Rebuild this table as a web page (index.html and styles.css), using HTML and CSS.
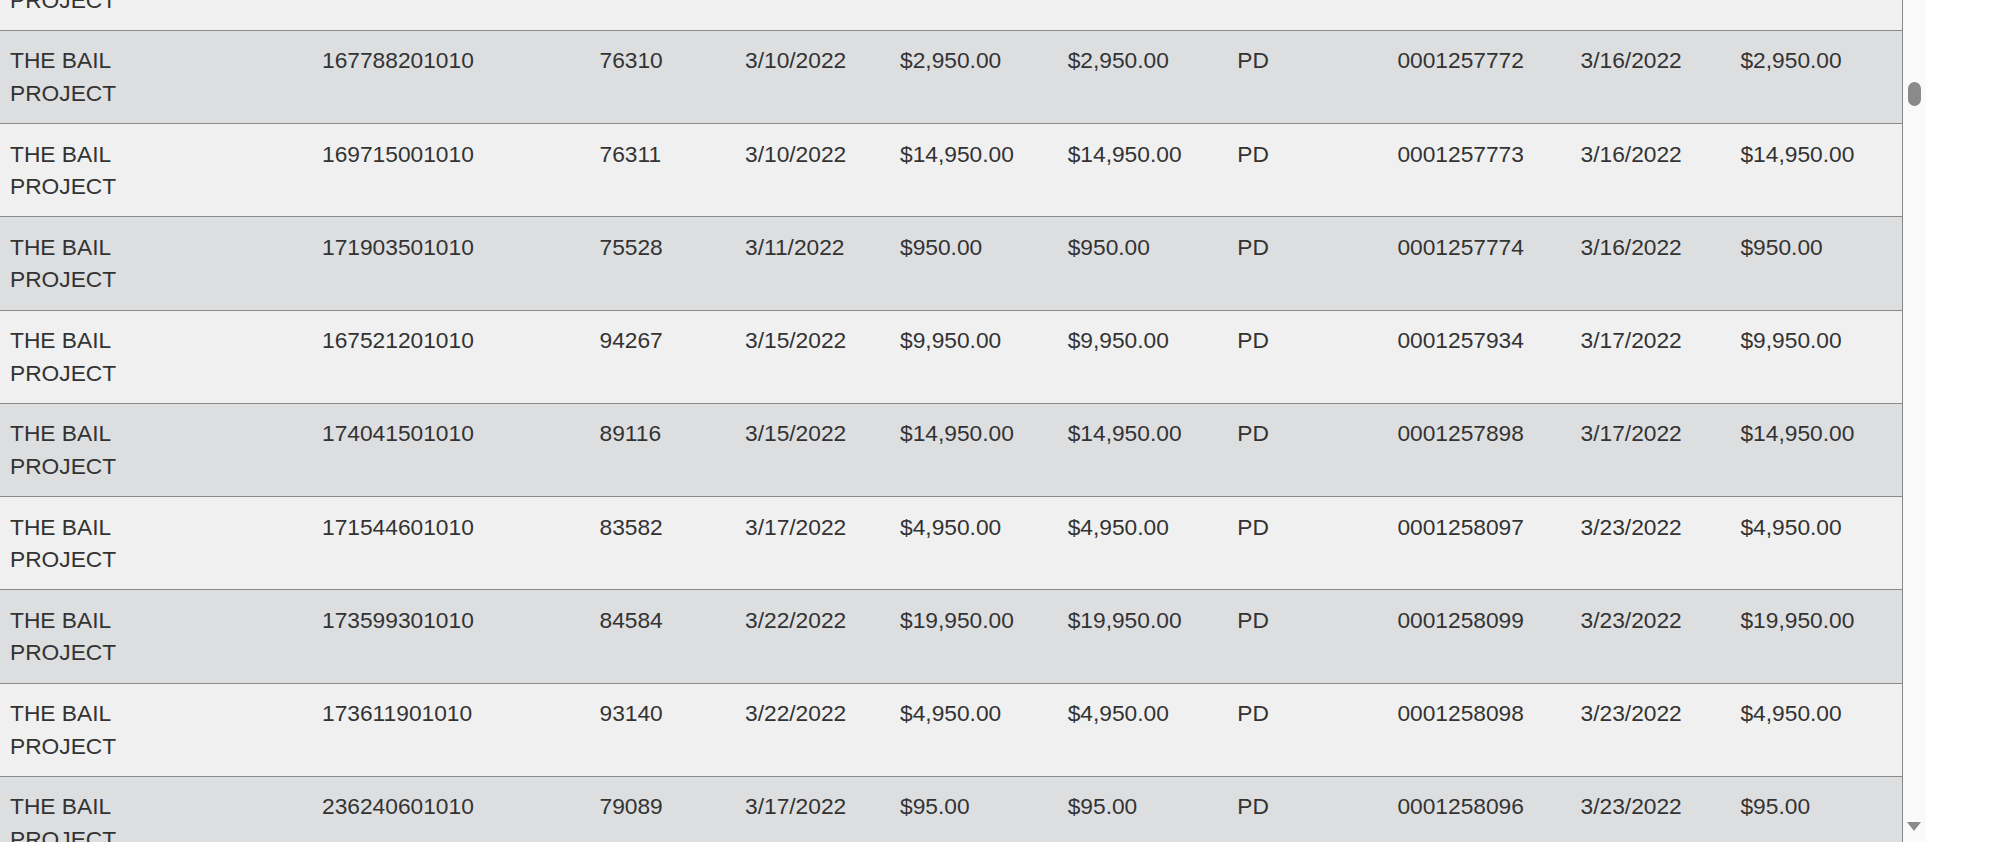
FILE: index.html
```html
<!DOCTYPE html>
<html>
<head>
<meta charset="utf-8">
<link rel="stylesheet" href="styles.css">
</head>
<body>
<div class="frame">
  <div class="pane">
    <div class="grid">
      <div class="row light"><div class="cell name">THE BAIL PROJECT</div><div class="cell">167788101010</div><div class="cell">76309</div><div class="cell">3/10/2022</div><div class="cell">$1,950.00</div><div class="cell">$1,950.00</div><div class="cell">PD</div><div class="cell">0001257771</div><div class="cell">3/16/2022</div><div class="cell">$1,950.00</div></div>
      <div class="row dark"><div class="cell name">THE BAIL PROJECT</div><div class="cell">167788201010</div><div class="cell">76310</div><div class="cell">3/10/2022</div><div class="cell">$2,950.00</div><div class="cell">$2,950.00</div><div class="cell">PD</div><div class="cell">0001257772</div><div class="cell">3/16/2022</div><div class="cell">$2,950.00</div></div>
      <div class="row light"><div class="cell name">THE BAIL PROJECT</div><div class="cell">169715001010</div><div class="cell">76311</div><div class="cell">3/10/2022</div><div class="cell">$14,950.00</div><div class="cell">$14,950.00</div><div class="cell">PD</div><div class="cell">0001257773</div><div class="cell">3/16/2022</div><div class="cell">$14,950.00</div></div>
      <div class="row dark"><div class="cell name">THE BAIL PROJECT</div><div class="cell">171903501010</div><div class="cell">75528</div><div class="cell">3/11/2022</div><div class="cell">$950.00</div><div class="cell">$950.00</div><div class="cell">PD</div><div class="cell">0001257774</div><div class="cell">3/16/2022</div><div class="cell">$950.00</div></div>
      <div class="row light"><div class="cell name">THE BAIL PROJECT</div><div class="cell">167521201010</div><div class="cell">94267</div><div class="cell">3/15/2022</div><div class="cell">$9,950.00</div><div class="cell">$9,950.00</div><div class="cell">PD</div><div class="cell">0001257934</div><div class="cell">3/17/2022</div><div class="cell">$9,950.00</div></div>
      <div class="row dark"><div class="cell name">THE BAIL PROJECT</div><div class="cell">174041501010</div><div class="cell">89116</div><div class="cell">3/15/2022</div><div class="cell">$14,950.00</div><div class="cell">$14,950.00</div><div class="cell">PD</div><div class="cell">0001257898</div><div class="cell">3/17/2022</div><div class="cell">$14,950.00</div></div>
      <div class="row light"><div class="cell name">THE BAIL PROJECT</div><div class="cell">171544601010</div><div class="cell">83582</div><div class="cell">3/17/2022</div><div class="cell">$4,950.00</div><div class="cell">$4,950.00</div><div class="cell">PD</div><div class="cell">0001258097</div><div class="cell">3/23/2022</div><div class="cell">$4,950.00</div></div>
      <div class="row dark"><div class="cell name">THE BAIL PROJECT</div><div class="cell">173599301010</div><div class="cell">84584</div><div class="cell">3/22/2022</div><div class="cell">$19,950.00</div><div class="cell">$19,950.00</div><div class="cell">PD</div><div class="cell">0001258099</div><div class="cell">3/23/2022</div><div class="cell">$19,950.00</div></div>
      <div class="row light"><div class="cell name">THE BAIL PROJECT</div><div class="cell">173611901010</div><div class="cell">93140</div><div class="cell">3/22/2022</div><div class="cell">$4,950.00</div><div class="cell">$4,950.00</div><div class="cell">PD</div><div class="cell">0001258098</div><div class="cell">3/23/2022</div><div class="cell">$4,950.00</div></div>
      <div class="row dark"><div class="cell name">THE BAIL PROJECT</div><div class="cell">236240601010</div><div class="cell">79089</div><div class="cell">3/17/2022</div><div class="cell">$95.00</div><div class="cell">$95.00</div><div class="cell">PD</div><div class="cell">0001258096</div><div class="cell">3/23/2022</div><div class="cell">$95.00</div></div>
    </div>
  </div>
  <div class="scrollbar">
    <div class="thumb"></div>
    <div class="arrow-down"></div>
  </div>
</div>
</body>
</html>
```
FILE: styles.css
```css
html, body {
  margin: 0;
  padding: 0;
  background: #ffffff;
}

.frame {
  display: flex;
  height: 842px;
  overflow: hidden;
}

.pane {
  width: 1902px;
  flex: 0 0 1902px;
  height: 842px;
  overflow: hidden;
  border-right: 1px solid #868686;
}

.grid {
  width: 1902px;
  margin-top: -62.5px;
  font-family: "Liberation Sans", Arial, sans-serif;
  font-size: 22.75px;
  line-height: 32.5px;
  color: #333333;
}

.row {
  display: grid;
  grid-template-columns: 312px 277.5px 145.5px 155px 167.7px 169.6px 160.1px 183.2px 159.9px 171.5px;
  border-bottom: 1px solid #8a8a8a;
}

.cell {
  padding: 13.5px 0 13.75px 10px;
  white-space: nowrap;
}

.cell.name {
  white-space: normal;
  padding-right: 150px;
}

.light { background: #f0f0f0; }
.dark { background: #dddee0; }

.scrollbar {
  width: 23px;
  flex: 0 0 23px;
  height: 842px;
  background: #fafafa;
  display: flex;
  flex-direction: column;
}

.thumb {
  width: 13px;
  height: 24px;
  margin: 82px 0 0 5px;
  border-radius: 7px;
  background: #8a8a8a;
}

.arrow-down {
  width: 0;
  height: 0;
  margin: auto 0 11px 4px;
  border-left: 7.5px solid transparent;
  border-right: 7.5px solid transparent;
  border-top: 9px solid #8a8a8a;
}
```
